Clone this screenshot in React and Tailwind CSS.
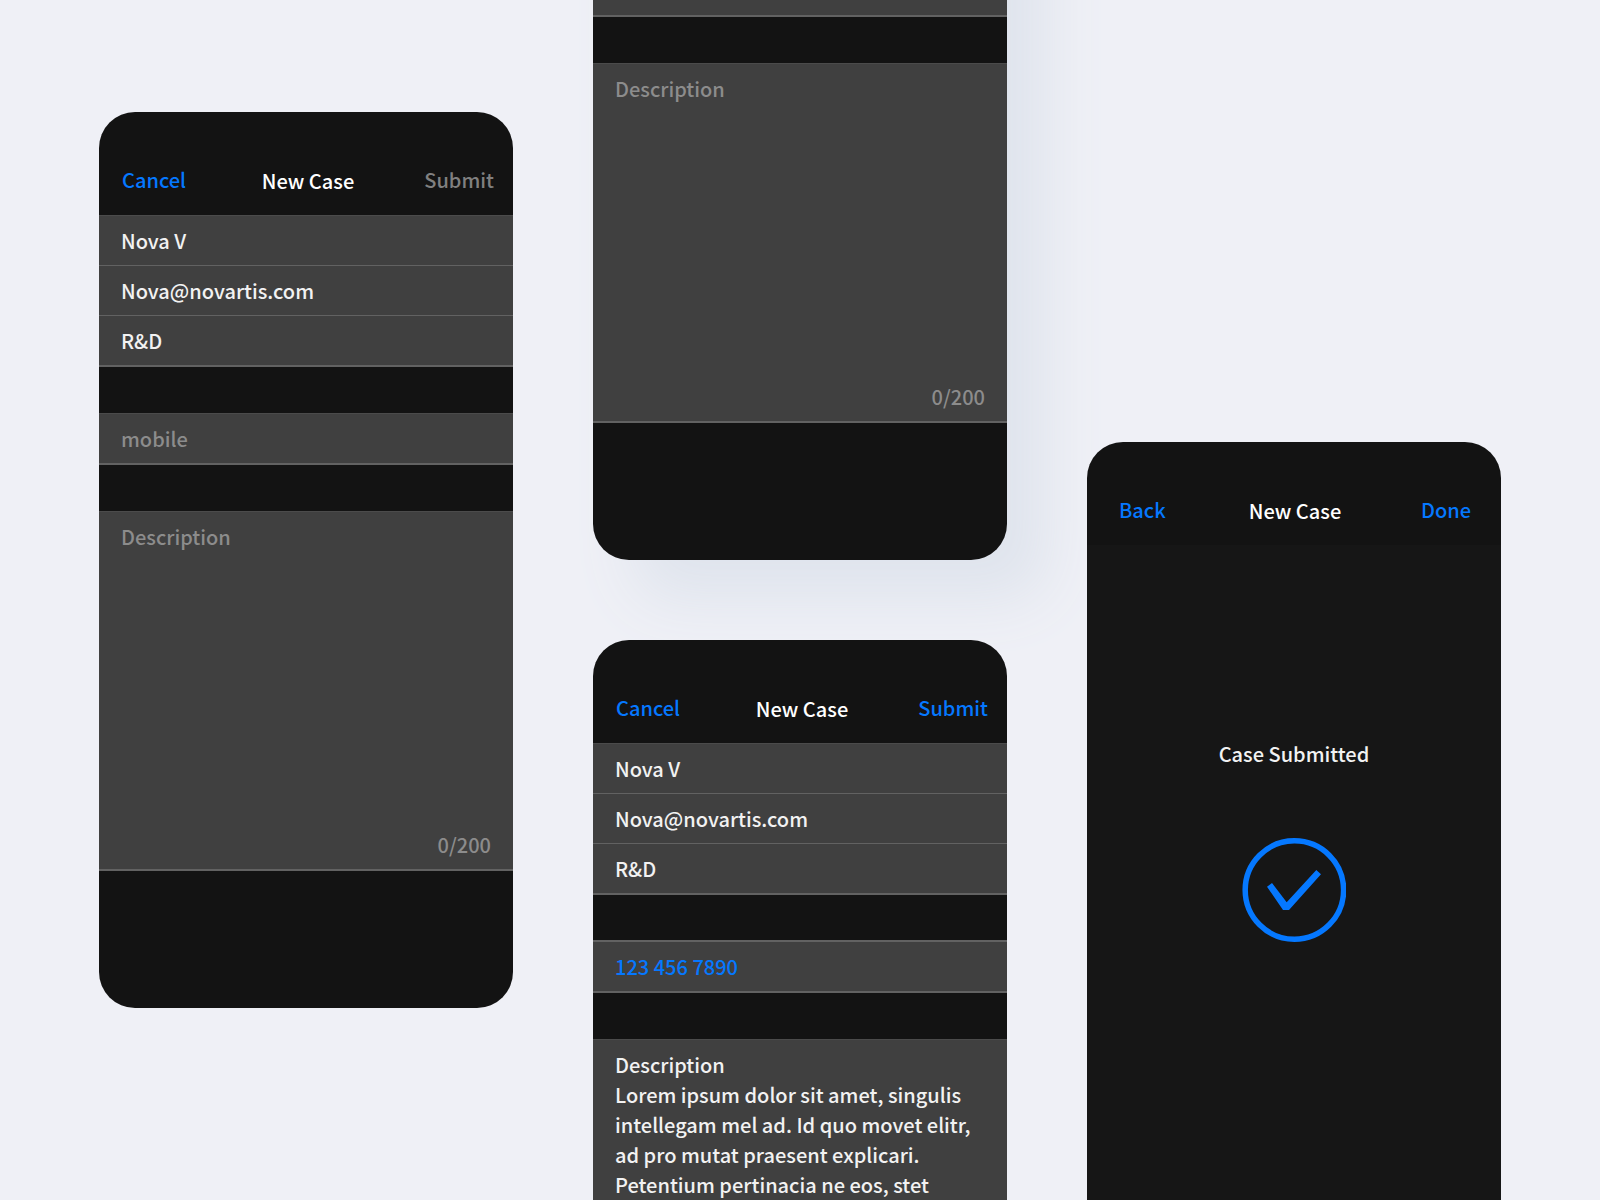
import { useId } from "react";

const CARD = "flex min-h-[896px] shrink-0 flex-col overflow-hidden rounded-[36px] bg-[#131313]";
const FIELD = "block w-full bg-transparent px-[22px] placeholder:text-[#8c8c8c] placeholder:opacity-100 outline-none";

function Header({ left, right, disabled = false, inset = "pr-[19px] pl-[23px]" }) {
  return (
    <header className={`grid h-[103px] grid-cols-[1fr_auto_1fr] items-end pb-5 ${inset}`}>
      <button type="button" className="justify-self-start leading-[30px] text-[#0578ff]">
        {left}
      </button>
      <h2 className="leading-7 whitespace-nowrap text-white">New Case</h2>
      <button
        type="button"
        disabled={disabled}
        className="justify-self-end leading-[30px] text-[#0578ff] disabled:text-[#808080]"
      >
        {right}
      </button>
    </header>
  );
}

function TextField({ label, type = "text", color = "text-[#f2f2f2]", ...props }) {
  return <input aria-label={label} type={type} className={`${FIELD} ${color} h-[49px]`} {...props} />;
}

function PhoneInput({ value = "" }) {
  const edge = value ? "mt-[45px] border-t-2 border-t-[#626262]" : "mt-[46px] border-t border-t-[#4b4b4b]";
  return (
    <div className={`border-b-2 border-b-[#626262] bg-[#404040] ${edge}`}>
      <TextField
        label="Mobile number"
        type="tel"
        placeholder="mobile"
        defaultValue={value}
        color="text-[#0578ff]"
      />
    </div>
  );
}

function Description({ text }) {
  const id = useId();
  return (
    <div className="mt-[46px] flex h-[360px] flex-col border-t border-b-2 border-t-[#4b4b4b] border-b-[#626262] bg-[#404040] pt-[10px]">
      {text && (
        <label htmlFor={id} className="px-[22px] leading-[30px] text-[#f2f2f2]">
          Description
        </label>
      )}
      <textarea
        id={id}
        aria-label={text ? undefined : "Description"}
        placeholder="Description"
        defaultValue={text}
        className={`${FIELD} flex-1 resize-none overflow-hidden leading-[30px] text-[#f2f2f2]`}
      />
      {!text && <p className="pr-[22px] pb-[9px] text-right leading-[30px] text-[#8c8c8c]">0/200</p>}
    </div>
  );
}

function CaseForm({ phone, text, disabled, className = "" }) {
  return (
    <section className={`${CARD} ${className}`}>
      <Header left="Cancel" right="Submit" disabled={disabled} />
      <div className="divide-y divide-[#626262] border-t border-b-2 border-t-[#4b4b4b] border-b-[#626262] bg-[#404040]">
        <div><TextField label="Name" defaultValue="Nova V" /></div>
        <div><TextField label="Email" type="email" defaultValue="Nova@novartis.com" /></div>
        <div><TextField label="Department" defaultValue="R&D" /></div>
      </div>
      <PhoneInput value={phone} />
      <Description text={text} />
    </section>
  );
}

function CaseSubmitted() {
  return (
    <section className={CARD}>
      <Header left="Back" right="Done" inset="pr-[30px] pl-8" />
      <div className="flex flex-1 flex-col items-center bg-[#161616] pt-[194px]">
        <p className="leading-[30px] text-[#f2f2f2]">Case Submitted</p>
        <svg className="mt-[69px] size-[104px]" viewBox="0 0 104 104" aria-hidden="true">
          <circle cx="52.4" cy="52" r="49.2" fill="none" stroke="#0578ff" strokeWidth="5.5" />
          <path d="M25 48.7 L30 45 L44.7 64.3 L74.3 32 L79 36.3 L47 72 H41 Z" fill="#0578ff" />
        </svg>
      </div>
    </section>
  );
}

export default function App() {
  return (
    <main className="grid h-screen grid-cols-3 items-start gap-20 overflow-hidden bg-[#eff0f6] px-[99px] font-['Noto_Sans_CJK_SC',sans-serif] text-[20px] font-medium">
      <div className="flex flex-col pt-28">
        <CaseForm disabled />
      </div>
      <div className="-mt-[336px] flex flex-col gap-20">
        <CaseForm disabled className="shadow-[40px_40px_60px_#dfe4ed]" />
        <CaseForm
          phone="123 456 7890"
          text="Lorem ipsum dolor sit amet, singulis intellegam mel ad. Id quo movet elitr, ad pro mutat praesent explicari. Petentium pertinacia ne eos, stet"
        />
      </div>
      <div className="flex flex-col pt-[442px]">
        <CaseSubmitted />
      </div>
    </main>
  );
}
